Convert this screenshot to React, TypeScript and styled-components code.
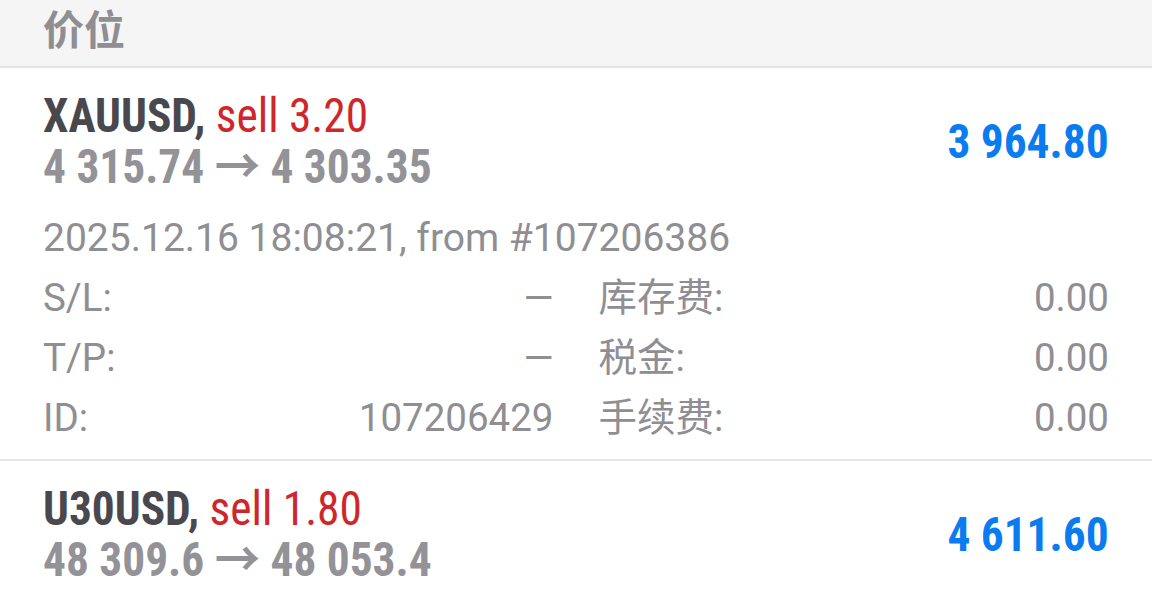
import React, { FC } from 'react';
import styled, { createGlobalStyle } from 'styled-components';

const GlobalStyle = createGlobalStyle`
    html, body {
        margin: 0;
        padding: 0;
        background: #ffffff;
    }
    body {
        width: 1152px;
        height: 603px;
        overflow: hidden;
        font-family: Roboto, "Noto Sans CJK SC", sans-serif;
    }
`;

// no Roboto Condensed on the box, so narrow plain Roboto a little
const condensed = `
    font-family: "Roboto Condensed", Roboto, "Noto Sans CJK SC", sans-serif;
    font-size: 48px;
    transform: scaleX(0.945);
`;

const Page = styled.div`
    display: flex;
    flex-direction: column;
`;

const SectionHeader = styled.div`
    height: 68px;
    display: flex;
    align-items: center;
    padding: 0 43px 11px;
    box-sizing: border-box;
    background: #f5f5f5;
    border-bottom: 2px solid #e4e4e4;
    color: #8e8e93;
    font-family: "Noto Sans CJK SC", sans-serif;
    font-weight: 700;
    font-size: 41px;
    line-height: 41px;
`;

const Position = styled.div<{ last?: boolean }>`
    padding: 22px 43px ${props => (props.last ? '0' : '11px')};
    border-bottom: ${props => (props.last ? 'none' : '2px solid #e6e6e6')};
`;

const Summary = styled.div`
    display: flex;
    align-items: center;
    justify-content: space-between;
`;

const Lines = styled.div`
    display: flex;
    flex-direction: column;
`;

const TitleLine = styled.div`
    ${condensed}
    transform-origin: left center;
    height: 51px;
    line-height: 51px;
    white-space: nowrap;
`;

const Symbol = styled.span`
    display: inline-block;
    font-weight: 700;
    color: #48484e;
`;

const Side = styled.span`
    display: inline-block;
    font-weight: 400;
    color: #cf262c;
`;

const PriceLine = styled.div`
    ${condensed}
    transform-origin: left center;
    height: 51px;
    line-height: 51px;
    font-weight: 700;
    color: #929297;
    white-space: nowrap;
`;

const Profit = styled.div`
    ${condensed}
    transform-origin: right center;
    font-weight: 700;
    color: #0a7cf0;
    white-space: nowrap;
`;

const Opened = styled.div`
    margin-top: 16px;
    font-size: 39px;
    line-height: 60px;
    color: #8e8e93;
    white-space: nowrap;
`;

const Details = styled.div`
    display: grid;
    grid-template-columns: 1fr 1fr;
    column-gap: 45px;
`;

const Field = styled.div`
    display: flex;
    justify-content: space-between;
    font-size: 38.5px;
    line-height: 60px;
    color: #8e8e93;
    white-space: nowrap;
`;

type Detail = [string, string];

type PositionData = {
    symbol: string;
    side: string;
    from: string;
    to: string;
    profit: string;
    opened?: string;
    details?: Detail[];
};

const positions: PositionData[] = [
    {
        symbol: 'XAUUSD',
        side: 'sell 3.20',
        from: '4 315.74',
        to: '4 303.35',
        profit: '3 964.80',
        opened: '2025.12.16 18:08:21, from #107206386',
        details: [
            ['S/L:', '—'],
            ['库存费:', '0.00'],
            ['T/P:', '—'],
            ['税金:', '0.00'],
            ['ID:', '107206429'],
            ['手续费:', '0.00'],
        ],
    },
    {
        symbol: 'U30USD',
        side: 'sell 1.80',
        from: '48 309.6',
        to: '48 053.4',
        profit: '4 611.60',
    },
];

const PositionItem: FC<{ item: PositionData; last?: boolean }> = ({ item, last }) => (
    <Position last={last}>
        <Summary>
            <Lines>
                <TitleLine>
                    <Symbol>{item.symbol},</Symbol> <Side>{item.side}</Side>
                </TitleLine>
                <PriceLine>
                    {item.from} → {item.to}
                </PriceLine>
            </Lines>
            <Profit>{item.profit}</Profit>
        </Summary>
        {item.opened && <Opened>{item.opened}</Opened>}
        {item.details && (
            <Details>
                {item.details.map(([label, value]) => (
                    <Field key={label}>
                        <span>{label}</span>
                        <span>{value}</span>
                    </Field>
                ))}
            </Details>
        )}
    </Position>
);

export default function App() {
    return (
        <>
            <GlobalStyle />
            <Page>
                <SectionHeader>价位</SectionHeader>
                {positions.map((p, i) => (
                    <PositionItem key={p.symbol} item={p} last={i === positions.length - 1} />
                ))}
            </Page>
        </>
    );
}
